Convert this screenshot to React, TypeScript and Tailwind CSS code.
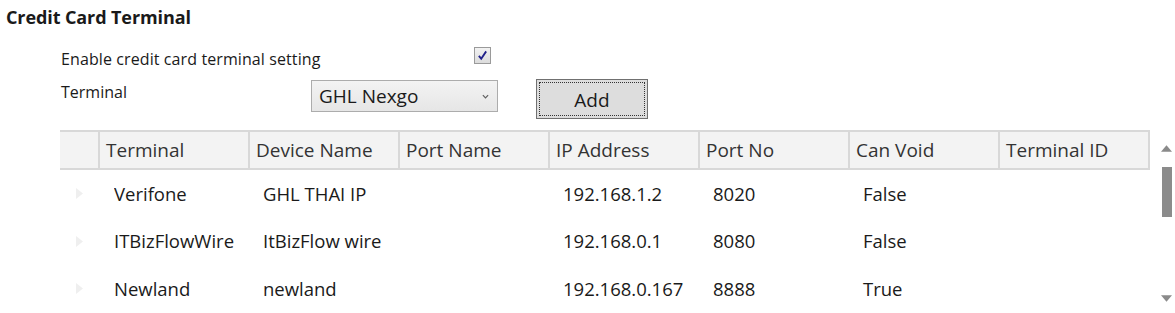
import React from "react";

const cols = ["Terminal", "Device Name", "Port Name", "IP Address", "Port No", "Can Void", "Terminal ID"];
const rows = [
  { h: "h-[47px]", c: ["Verifone", "GHL THAI IP", "", "192.168.1.2", "8020", "False", ""] },
  { h: "h-[48px]", c: ["ITBizFlowWire", "ItBizFlow wire", "", "192.168.0.1", "8080", "False", ""] },
  { h: "h-[47px]", c: ["Newland", "newland", "", "192.168.0.167", "8888", "True", ""] },
];

function Tri({ dir, cls }: { dir: "up" | "down" | "right"; cls: string }) {
  const pts = dir === "up" ? "0,7 6,0 12,7" : dir === "down" ? "0,0 12,0 6,7" : "0,0 7,5.5 0,11";
  const vb = dir === "right" ? "0 0 7 11" : "0 0 12 7";
  return (
    <svg viewBox={vb} className={cls}>
      <polygon points={pts} fill="currentColor" />
    </svg>
  );
}

export default function App() {
  return (
    <div className="w-[1175px] h-[313px] overflow-hidden bg-white text-[#1a1a1a]" style={{ fontFamily: '"Open Sans", "Noto Sans", sans-serif' }}>
      <div className="h-[34px] flex items-center pl-[6px] text-[18px] font-bold tracking-[-0.1px]">Credit Card Terminal</div>
      <div className="mt-[12px] pl-[61px] flex h-[26px] items-start">
        <div className="w-[413px] h-[26px] leading-[26px] text-[16px] tracking-[0.1px]">Enable credit card terminal setting</div>
        <div className="mt-[1px] w-[17px] h-[17px] border border-[#9a9a9a] bg-gradient-to-b from-[#f2f2f2] to-[#dcdcdc] flex items-center justify-center">
          <svg viewBox="0 0 12 12" className="w-[11px] h-[11px]">
            <path d="M2 6.5 L4.6 9.5 L10 1.5" fill="none" stroke="#22228a" strokeWidth="2" />
          </svg>
        </div>
      </div>
      <div className="mt-[7px] pl-[61px] flex h-[40px] items-start">
        <div className="w-[250px] h-[26px] leading-[26px] text-[16px]">Terminal</div>
        <div className="mt-[1px] w-[187px] h-[32px] border border-[#acacac] bg-gradient-to-b from-[#f3f3f3] to-[#e6e6e6] flex items-center justify-between pl-[7px] pr-[8px]">
          <span className="text-[19px] leading-none">GHL Nexgo</span>
          <svg viewBox="0 0 8 5" className="w-[7px] h-[5px]">
            <path d="M1 1 L4 4 L7 1" fill="none" stroke="#606060" strokeWidth="1.4" />
          </svg>
        </div>
        <div className="ml-[38px] w-[112px] h-[40px] border border-[#707070] bg-[#dddddd] p-[2px]">
          <div className="w-full h-full border border-dotted border-[#333] flex items-center justify-center text-[19px] pt-[3px]">Add</div>
        </div>
      </div>
      <div className="mt-[11px] flex">
        <div className="ml-[60px] w-[1090px]">
          <div className="flex h-[40px] border-t-2 border-b-2 border-[#d8d8d8] bg-[#f3f3f3] text-[19px] text-[#333]">
            <div className="w-[38px] shrink-0" />
            {cols.map((c, i) => (
              <div key={c} className={`w-[150px] shrink-0 border-l-2 border-[#d8d8d8] pl-[6px] flex items-center whitespace-nowrap overflow-hidden ${i === cols.length - 1 ? "border-r-2 w-[152px]" : ""}`}>
                {c}
              </div>
            ))}
          </div>
          {rows.map((r, ri) => (
            <div key={ri} className={`flex ${r.h} items-center text-[18.5px]`}>
              <div className="w-[38px] shrink-0 pl-[16px] flex items-center">
                <Tri dir="right" cls="w-[7px] h-[11px] text-[#efefef]" />
              </div>
              {r.c.map((v, i) => (
                <div key={i} className={`w-[150px] shrink-0 whitespace-nowrap ${i === 0 ? "pl-[16px]" : "pl-[15px]"}`}>
                  {i === 0 ? <div className="w-[120px] overflow-hidden">{v}</div> : v}
                </div>
              ))}
            </div>
          ))}
        </div>
        <div className="ml-[10px] w-[13px] flex flex-col items-center">
          <Tri dir="up" cls="mt-[15px] w-[11px] h-[7px] text-[#8a8a8a]" />
          <div className="mt-[15px] w-[10px] h-[50px] bg-[#8b8b8b]" />
          <div className="h-[78px]" />
          <Tri dir="down" cls="w-[11px] h-[7px] text-[#8a8a8a]" />
        </div>
      </div>
    </div>
  );
}
